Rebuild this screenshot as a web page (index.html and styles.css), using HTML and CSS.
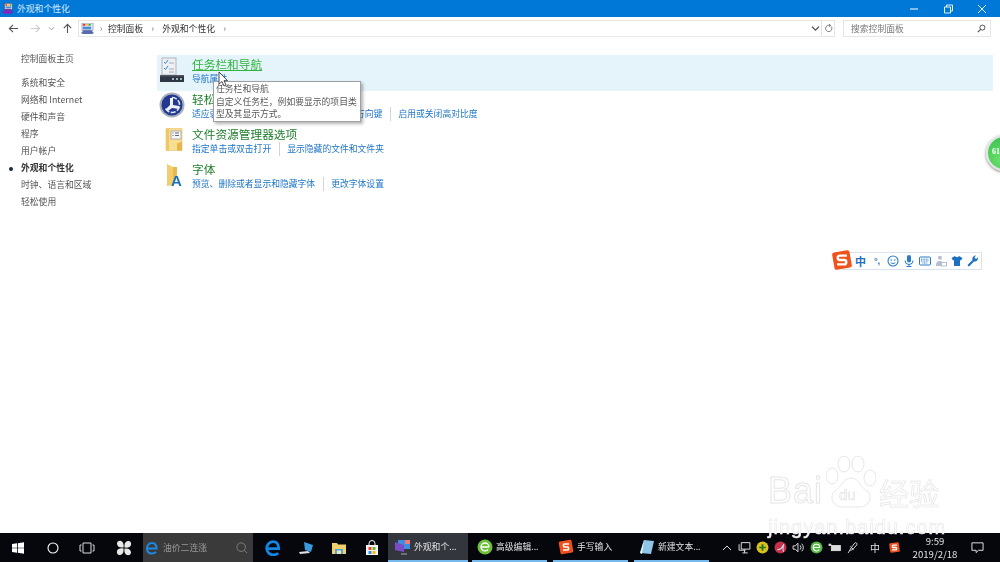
FILE: index.html
```html
<!DOCTYPE html>
<html lang="zh-CN">
<head>
    <meta charset="UTF-8">
    <title>外观和个性化</title>
    <link rel="stylesheet" href="styles.css">
</head>
<body>
    <!-- Title bar -->
    <div class="titlebar">
        <svg class="title-icon" viewBox="0 0 14 12"><rect x="3" y="0" width="9" height="7" fill="#e8eef8" stroke="#445" stroke-width=".6"/><rect x="4" y="1" width="2" height="2" fill="#e33"/><rect x="6.500" y="1" width="2" height="2" fill="#fb3"/><rect x="9" y="1" width="2" height="2" fill="#3a5"/><rect x="4" y="3.600" width="7" height="2.400" fill="#58c"/><path d="M0 10 L4 7 L10 7 L13 10 L11 12 L2 12 Z" fill="#7a2bb8"/></svg>
        <span class="title-text">外观和个性化</span>
        <div class="window-buttons">
            <svg viewBox="0 0 10 10"><path d="M1 5h8" stroke="#fff" fill="none"/></svg>
            <svg viewBox="0 0 10 10"><path d="M1.500 3h6v6h-6zM3.500 3V1h6v6H7.500" stroke="#fff" fill="none" stroke-width=".9"/></svg>
            <svg viewBox="0 0 10 10"><path d="M1 1l8 8M9 1l-8 8" stroke="#fff" fill="none" stroke-width=".9"/></svg>
        </div>
    </div>

    <!-- Address bar -->
    <div class="addressbar">
        <div class="nav-buttons">
            <svg class="nav-btn back" viewBox="0 0 12 12"><path d="M11 6H1.500M5.500 2L1.500 6l4 4" stroke="#555" fill="none" stroke-width="1.200"/></svg>
            <svg class="nav-btn" viewBox="0 0 12 12"><path d="M1 6h9.500M6.500 2l4 4-4 4" stroke="#ccc" fill="none" stroke-width="1.200"/></svg>
            <svg class="nav-drop" viewBox="0 0 8 8"><path d="M1 2.500l3 3 3-3" stroke="#999" fill="none"/></svg>
            <svg class="nav-btn" viewBox="0 0 12 12"><path d="M6 11V1.500M2 5.500l4-4 4 4" stroke="#555" fill="none" stroke-width="1.200"/></svg>
        </div>
        <div class="address-box">
            <svg class="crumb-icon" viewBox="0 0 14 12"><rect x="1" y="0" width="12" height="8" fill="#e8eef8" stroke="#667" stroke-width=".6"/><rect x="2" y="1" width="2.500" height="2" fill="#d33"/><rect x="5" y="1" width="2.500" height="2" fill="#fb3"/><rect x="8" y="1" width="2.500" height="2" fill="#3a5"/><rect x="2" y="4" width="9" height="3" fill="#4a8ad8"/><path d="M0 11 L3 8 L11 8 L14 11 L12 12 L2 12 Z" fill="#5a6ab0"/></svg>
            <span class="crumb-sep">›</span>
            <span class="crumb">控制面板</span>
            <span class="crumb-sep">›</span>
            <span class="crumb">外观和个性化</span>
            <span class="crumb-sep">›</span>
            <svg class="address-drop" viewBox="0 0 8 8"><path d="M1 2.500l3 3 3-3" stroke="#555" fill="none" stroke-width="1.100"/></svg>
        </div>
        <div class="refresh-box">
            <svg viewBox="0 0 10 10"><path d="M7.800 2.600A3.500 3.500 0 1 1 5 1.500H7M5.500 0L7.300 1.500 5.500 3" stroke="#666" fill="none" stroke-width=".9"/></svg>
        </div>
        <div class="search-box">
            <span>搜索控制面板</span>
            <svg viewBox="0 0 10 10"><circle cx="6" cy="4" r="2.800" stroke="#555" fill="none" stroke-width="1.100"/><path d="M4 6L1 9" stroke="#555" stroke-width="1.400"/></svg>
        </div>
    </div>

    <!-- Main area -->
    <div class="main">
        <ul class="sidebar">
            <li class="home">控制面板主页</li>
            <li>系统和安全</li>
            <li>网络和 Internet</li>
            <li>硬件和声音</li>
            <li>程序</li>
            <li>用户帐户</li>
            <li class="current">外观和个性化</li>
            <li>时钟、语言和区域</li>
            <li>轻松使用</li>
        </ul>

        <div class="content">
            <div class="row hover">
                <svg class="row-icon" viewBox="0 0 26 26"><rect x="3" y="1" width="14" height="17" fill="#eef1f4" stroke="#99a" stroke-width=".7"/><path d="M5 5l1.500 1.500L9 3M5 11l1.500 1.500L9 9" stroke="#2a8ad0" fill="none"/><path d="M10 6h5M10 12h5M10 15h5" stroke="#aab"/><rect x="1" y="18" width="24" height="7" fill="#2c3644"/><rect x="1" y="18" width="24" height="1.500" fill="#556"/><path d="M13 22h2M17 22h2M21 22h2" stroke="#cdd" stroke-width="1.500"/></svg>
                <div class="row-text">
                    <div class="row-title">任务栏和导航</div>
                    <div class="row-links"><span>导航属性</span></div>
                </div>
            </div>
            <div class="row">
                <svg class="row-icon" viewBox="0 0 26 26"><circle cx="13" cy="13" r="12.500" fill="#a8afbc"/><circle cx="13" cy="13" r="10.500" fill="#23398f"/><path d="M13 5.500a7.500 7.500 0 1 1-7 10" stroke="#dfe6f6" stroke-width="1.600" fill="none" stroke-dasharray="5 1.500"/><path d="M11 6h3v7l6 1v3l-7-1-4 3-2-2 4-4z" fill="#eef2fb"/></svg>
                <div class="row-text">
                    <div class="row-title">轻松使用设置中心</div>
                    <div class="row-links"><span>适应弱视</span><span>使用屏幕阅读</span><span>启用易按的方向键</span><span>启用或关闭高对比度</span></div>
                </div>
            </div>
            <div class="row">
                <svg class="row-icon" viewBox="0 0 26 26"><path d="M7 1.500h16v22H7z" fill="#f8de93" stroke="#e5c26b" stroke-width=".6"/><path d="M7 1.500h3v22H7z" fill="#efc765"/><rect x="12" y="4" width="10" height="8" fill="#f4f6f8" stroke="#889" stroke-width=".6"/><path d="M13.500 6h1M13.500 8.500h1M16 6h4M16 8.500h4" stroke="#667"/><path d="M18 23.500v-7l5-2v9z" fill="#e8b54a"/></svg>
                <div class="row-text">
                    <div class="row-title">文件资源管理器选项</div>
                    <div class="row-links"><span>指定单击或双击打开</span><span>显示隐藏的文件和文件夹</span></div>
                </div>
            </div>
            <div class="row">
                <svg class="row-icon" viewBox="0 0 26 26"><path d="M8 2l6 3v18l-6 1z" fill="#f3cd6e"/><path d="M14 5h4v8l-4 10z" fill="#e9b94f"/><text x="12" y="24" class="font-a">A</text></svg>
                <div class="row-text">
                    <div class="row-title">字体</div>
                    <div class="row-links"><span>预览、删除或者显示和隐藏字体</span><span>更改字体设置</span></div>
                </div>
            </div>
        </div>
    </div>

    <!-- Taskbar -->
    <div class="taskbar">
        <div class="tb-icon start">
            <svg viewBox="0 0 12 12"><path d="M0 2l5-.7V5.700H0zM5.800 1.200L12 .3v5.400H5.800zM0 6.300h5v4.400l-5-.7zM5.800 6.300H12v5.400l-6.200-.9z" fill="#fff"/></svg>
        </div>
        <div class="tb-icon cortana">
            <svg viewBox="0 0 12 12"><circle cx="6" cy="6" r="5" stroke="#fff" stroke-width="1.100" fill="none"/></svg>
        </div>
        <div class="tb-icon taskview">
            <svg viewBox="0 0 16 12"><path d="M4 1h8v10H4zM2.500 3H1v6h1.500M13.500 3H15v6h-1.500" stroke="#ddd" fill="none"/></svg>
        </div>
        <div class="tb-icon fan">
            <svg viewBox="0 0 16 16"><g fill="#e8e8e8"><path d="M7.500 7.500C3 8 1 6 1 3.500 1 1.500 3 .5 5 1c2 .5 3 3 2.500 6.500z"/><path d="M8.500 7.500C8 3 10 1 12.500 1c2 0 3 2 2.500 4-.5 2-3 3-6.500 2.500z"/><path d="M8.500 8.500C13 8 15 10 15 12.500c0 2-2 3-4 2.500-2-.5-3-3-2.500-6.500z"/><path d="M7.500 8.500C8 13 6 15 3.500 15c-2 0-3-2-2.500-4 .5-2 3-3 6.500-2.500z"/></g></svg>
        </div>
        <div class="tb-search">
            <svg class="tb-search-e" viewBox="0 0 14 14"><path d="M2 7.500h9.500C11.500 4 9.500 2 7 2 4 2 2 4.500 2 7.500s2 5 5 5c1.500 0 3-.5 4-1.500" stroke="#1d8ae8" stroke-width="2" fill="none"/></svg>
            <span>油价二连涨</span>
            <svg class="tb-search-lens" viewBox="0 0 14 14"><circle cx="6" cy="6" r="5" stroke="#888" fill="none"/><path d="M10 10l3 3" stroke="#888"/></svg>
        </div>
        <div class="tb-icon edge">
            <svg viewBox="0 0 14 14"><path d="M1.500 7.500h10.500C12 3.500 10 1.500 7 1.500 3.500 1.500 1.500 4.500 1.500 7.500s2.500 5.500 5.500 5.500c2 0 3.500-.5 4.500-1.500" stroke="#1088e8" stroke-width="2.400" fill="none"/></svg>
        </div>
        <div class="tb-icon">
            <svg viewBox="0 0 16 16"><path d="M6 2l9 3-2 7-6-2z" fill="#3a9ae0"/><path d="M1 12l9-1 2 2-10 1z" fill="#dde"/></svg>
        </div>
        <div class="tb-icon">
            <svg viewBox="0 0 16 16"><path d="M1 3h5l1 1.500h8V14H1z" fill="#f3cf6c"/><rect x="4" y="9" width="8" height="5" fill="#4aa8dc"/><rect x="6" y="10.500" width="4" height="3.500" fill="#f3e6b0"/></svg>
        </div>
        <div class="tb-icon">
            <svg viewBox="0 0 16 16"><path d="M2 5h12v10H2z" fill="#f4f4f4"/><path d="M5 5V3.500a3 3 0 0 1 6 0V5" stroke="#f4f4f4" fill="none"/><rect x="4.500" y="7" width="3" height="3" fill="#e8452c"/><rect x="8.500" y="7" width="3" height="3" fill="#6cb52d"/><rect x="4.500" y="11" width="3" height="3" fill="#2a8fe0"/><rect x="8.500" y="11" width="3" height="3" fill="#f6b800"/></svg>
        </div>

        <div class="task active">
            <svg viewBox="0 0 16 16"><rect x="3" y="1" width="12" height="9" fill="#3d8ee0"/><rect x="10" y="1" width="5" height="4" fill="#f27a7a"/><path d="M0 3l9 3v7l-9-2z" fill="#7a4bc8"/><path d="M6 15h6" stroke="#aaa"/></svg>
            <span>外观和个...</span>
        </div>
        <div class="task">
            <svg viewBox="0 0 16 16"><circle cx="8" cy="8" r="7.500" fill="#6cc03a"/><path d="M4 8h8M4 8a4 4 0 0 1 8 0M4 8a4 4 0 0 0 7 2.500" stroke="#fff" stroke-width="1.300" fill="none"/></svg>
            <span>高级编辑...</span>
        </div>
        <div class="task">
            <svg viewBox="0 0 16 16"><rect x="1.500" y="1.500" width="13" height="13" rx="1.500" fill="#ee4f1c" transform="rotate(-10 8 8)"/><path d="M11 5H6.500C5 5 5 8 6.500 8h3c1.500 0 1.500 3 0 3H5" stroke="#fff" stroke-width="1.600" fill="none"/></svg>
            <span>手写输入</span>
        </div>
        <div class="task">
            <svg viewBox="0 0 16 16"><path d="M5 1l10 1-3 13-11-1z" fill="#8fc6e8"/><path d="M5 1L1 14l2 1z" fill="#e8f4fa"/></svg>
            <span>新建文本...</span>
        </div>

        <div class="tray">
            <svg class="tray-chevron" viewBox="0 0 10 10"><path d="M1 7l4-4 4 4" stroke="#ddd" fill="none"/></svg>
            <svg class="tray-icon" viewBox="0 0 12 12"><path d="M3 1.500h8v6H3zM1 3v5.500h6M6 8v3M4 11h5" stroke="#ddd" fill="none" stroke-width=".9"/></svg>
            <svg class="tray-icon" viewBox="0 0 12 12"><circle cx="6" cy="6" r="5.500" fill="#d8c020"/><path d="M3 6h6M6 3v6" stroke="#207020" stroke-width="1.600"/></svg>
            <svg class="tray-icon" viewBox="0 0 12 12"><circle cx="6" cy="6" r="5.500" fill="#c8304a"/><path d="M3 8c3 0 5-2 6-5-1 4-1 6 0 7" stroke="#cde" fill="none"/></svg>
            <svg class="tray-icon" viewBox="0 0 12 12"><path d="M1 4.500h2l2.500-2.500v8L3 7.500H1zM7.500 4a3 3 0 0 1 0 4M9 2.500a5.500 5.500 0 0 1 0 7" stroke="#ddd" fill="none" stroke-width=".9"/></svg>
            <svg class="tray-icon" viewBox="0 0 12 12"><circle cx="6" cy="6" r="5.500" fill="#58b848"/><path d="M3 6h6M3 6a3 3 0 0 1 6 0M3 6a3 3 0 0 0 5.500 1.800" stroke="#fff" fill="none"/></svg>
            <svg class="tray-icon" viewBox="0 0 12 12"><rect x="3" y="4" width="8.500" height="5" fill="#ddd" stroke="#eee" stroke-width=".6"/><rect x=".5" y="2.500" width="2.500" height="2" fill="#ddd"/></svg>
            <svg class="tray-icon" viewBox="0 0 12 12"><path d="M2 11l3-5 3-4c1-1 2.500 0 2 1.500L7 7 4 9M4 5l3 3" stroke="#ddd" fill="none" stroke-width=".9"/></svg>
            <span class="tray-ime">中</span>
            <svg class="tray-icon" viewBox="0 0 16 16"><rect x="2" y="2" width="12" height="12" rx="1.500" fill="#ee4f1c" transform="rotate(-8 8 8)"/><path d="M11 5H6.500C5 5 5 8 6.500 8h3c1.500 0 1.500 3 0 3H5" stroke="#fff" stroke-width="1.600" fill="none"/></svg>
            <div class="clock"><div>9:59</div><div>2019/2/18</div></div>
            <svg class="tray-notify" viewBox="0 0 14 14"><path d="M1 2h12v8H8l-2.500 2.500V10H1z" stroke="#eee" fill="none"/></svg>
        </div>
    </div>

    <!-- Floating items -->
    <div class="tooltip">
        <div>任务栏和导航</div>
        <div>自定义任务栏，例如要显示的项目类</div>
        <div>型及其显示方式。</div>
    </div>
    <svg class="cursor" viewBox="0 0 10 16"><path d="M1 1v12l3-2.500 2 4.500 2-1-2-4.300h3.500z" fill="#fff" stroke="#222" stroke-width=".8"/></svg>

    <div class="green-ball"><span>61</span></div>

    <div class="ime-bar">
        <svg class="ime-logo" viewBox="0 0 20 20"><rect x="2" y="2" width="16" height="16" rx="2" fill="#f0521c" transform="rotate(-10 10 10)"/><path d="M14.500 6H8c-2.500 0-2.500 4 0 4h4c2.500 0 2.500 4 0 4H5.500" stroke="#fff" stroke-width="2.200" fill="none"/></svg>
        <span class="ime-zh">中</span>
        <span class="ime-punc">°,</span>
        <svg viewBox="0 0 12 12"><circle cx="6" cy="6" r="5" fill="none" stroke="#2a7ac8" stroke-width="1.100"/><circle cx="4.300" cy="5" r=".8" fill="#2a7ac8"/><circle cx="7.700" cy="5" r=".8" fill="#2a7ac8"/><path d="M3.700 7.500c1 1.300 3.600 1.300 4.600 0" stroke="#2a7ac8" fill="none"/></svg>
        <svg viewBox="0 0 12 12"><rect x="4" y="0" width="4" height="7.500" rx="2" fill="#2a7ac8"/><path d="M2 5.500a4 4 0 0 0 8 0M6 9.500V12M3.500 11.500h5" stroke="#2a7ac8" fill="none"/></svg>
        <svg viewBox="0 0 12 12"><rect x=".5" y="2" width="11" height="8" rx="1" fill="none" stroke="#2a7ac8"/><path d="M2 4.200h8M2 6h8M3.500 8h5" stroke="#2a7ac8" stroke-dasharray="1 .6"/></svg>
        <svg viewBox="0 0 12 12"><circle cx="5" cy="2.800" r="2" fill="#b4c0d0"/><path d="M1 11c0-4 1.500-5 4-5s3 1 3 2H6v3z" fill="#b4c0d0"/><rect x="6.500" y="7.500" width="5" height="3.500" fill="none" stroke="#b4c0d0"/></svg>
        <svg viewBox="0 0 12 12"><path d="M4 1L0.500 3 2 5.500l1-.5V11h6V5l1 .5L11.500 3 8 1C7.500 2.500 4.500 2.500 4 1z" fill="#1f70c0"/></svg>
        <svg viewBox="0 0 12 12"><path d="M1 11c-.5-.5-.5-1 0-1.500L5.500 5C5 3 6 .5 9 .5L7.500 2.500 9 4l2-1.500C11.500 5 9 7 7 6.500L2.500 11c-.5.500-1 .500-1.500 0z" fill="#1f70c0"/></svg>
    </div>

    <div class="watermark">
        <div class="wm-top">
            <span class="wm-bai">Bai</span>
            <svg class="wm-paw" viewBox="0 0 50 56">
                <g fill="#fff" stroke="#e6e6e6" stroke-width="1"><ellipse cx="6" cy="20" rx="6" ry="8"/><ellipse cx="18" cy="8" rx="6" ry="8"/><ellipse cx="32" cy="8" rx="6" ry="8"/><ellipse cx="44" cy="22" rx="6" ry="8"/><path d="M25 22c8 0 9 9 16 13 6 4 3 16-7 16H16C6 51 3 39 9 35c7-4 8-13 16-13z"/></g>
                <text x="13" y="44" class="wm-du">du</text>
            </svg>
            <span class="wm-jy">经验</span>
        </div>
        <div class="wm-url">jingyan.baidu.com</div>
    </div>
</body>
</html>
```

FILE: styles.css
```css
* {
    box-sizing: border-box;
}

html, body {
    margin: 0;
    height: 100%;
}

body {
    position: relative;
    display: flex;
    flex-direction: column;
    overflow: hidden;
    background-color: #ffffff;
    font-family: "Noto Sans CJK SC", "Noto Sans", sans-serif;
    font-size: 8.8px;
    color: #444;
    filter: blur(0.3px);
}

svg {
    display: block;
}

/* Title bar */
.titlebar {
    display: flex;
    align-items: center;
    flex: 0 0 17px;
    padding-left: 2px;
    background-color: #0078d7;
    color: #d6e8f7;
}

.title-icon {
    width: 12px;
    height: 11px;
    margin-right: 3px;
}

.window-buttons {
    display: flex;
    gap: 24px;
    margin-left: auto;
    padding-right: 13px;
}

.window-buttons svg {
    width: 10px;
    height: 10px;
}

/* Address bar */
.addressbar {
    display: flex;
    align-items: flex-start;
    flex: 0 0 23px;
    padding-top: 3px;
    color: #333;
}

.nav-buttons {
    display: flex;
    align-items: center;
    width: 78px;
    height: 17px;
    padding-left: 8px;
}

.nav-btn {
    flex: none;
    width: 11px;
    height: 11px;
}

.nav-btn.back {
    margin-right: 11px;
}

.nav-drop {
    flex: none;
    width: 7px;
    height: 7px;
    margin: 0 7px;
}

.address-box {
    display: flex;
    align-items: center;
    width: 744px;
    height: 17px;
    padding-left: 2px;
    border: 1px solid #e6e6e6;
}

.crumb-icon {
    width: 13px;
    height: 11px;
}

.crumb-sep {
    width: 19px;
    text-align: center;
    color: #777;
    font-size: 9px;
}

.crumb-sep:nth-of-type(1) {
    width: 14px;
}

.address-drop {
    width: 9px;
    height: 9px;
    margin-left: auto;
    margin-right: 1px;
}

.refresh-box {
    display: flex;
    align-items: center;
    justify-content: center;
    width: 13px;
    height: 17px;
    border: 1px solid #e6e6e6;
    border-left: 0;
}

.refresh-box svg {
    width: 9px;
    height: 9px;
}

.search-box {
    display: flex;
    align-items: center;
    justify-content: space-between;
    width: 148px;
    height: 17px;
    margin-left: 8px;
    padding: 0 4px 0 7px;
    border: 1px solid #e6e6e6;
    color: #777;
}

.search-box svg {
    width: 9px;
    height: 9px;
}

/* Main area */
.main {
    display: flex;
    flex: 1;
    min-height: 0;
}

.sidebar {
    flex: 0 0 157px;
    margin: 0;
    padding: 11px 0 0 21px;
    list-style: none;
    color: #555;
}

.sidebar li {
    height: 16.900px;
    line-height: 16.900px;
    white-space: nowrap;
}

.sidebar .home {
    margin-bottom: 7.500px;
}

.sidebar .current {
    position: relative;
    font-weight: bold;
    color: #333;
}

.sidebar .current::before {
    content: "";
    position: absolute;
    left: -12px;
    top: 7px;
    width: 4px;
    height: 4px;
    border-radius: 50%;
    background-color: #1c2a44;
}

.content {
    flex: 1;
    padding: 15px 7px 0 0;
}

.row {
    display: flex;
    align-items: flex-start;
    height: 35px;
}

.row.hover {
    height: 36px;
    margin-bottom: -1px;
    background-color: #e5f3fb;
}

.row-icon {
    flex: none;
    width: 26px;
    height: 26px;
    margin: 2px 7px 0 2px;
}

.row-title {
    height: 17px;
    line-height: 18px;
    font-size: 11.700px;
    color: #1f7d2c;
    white-space: nowrap;
}

.row.hover .row-title {
    color: #2fb53c;
    text-decoration: underline;
}

.row-links {
    display: flex;
    height: 14px;
    line-height: 14px;
    color: #1c74c8;
    white-space: nowrap;
}

.row-links span + span {
    margin-left: 8px;
    padding-left: 7px;
    border-left: 1px solid #d4d4d4;
}

.font-a {
    font: bold 15px "Liberation Sans", sans-serif;
    fill: #1a6fc0;
}

/* Taskbar */
.taskbar {
    display: flex;
    align-items: center;
    flex: 0 0 29px;
    background-color: #05070c;
    color: #e0e0e0;
}

.tb-icon {
    display: flex;
    align-items: center;
    justify-content: center;
    width: 33px;
    height: 100%;
}

.tb-icon svg {
    width: 16px;
    height: 16px;
}

.tb-icon.start {
    width: 36px;
}

.tb-icon.start svg,
.tb-icon.cortana svg {
    width: 12px;
    height: 12px;
}

.tb-icon.taskview {
    width: 36px;
}

.tb-icon.fan {
    width: 37px;
}

.tb-search {
    display: flex;
    align-items: center;
    width: 110px;
    height: 100%;
    margin: 0 3px 0 1px;
    padding: 0 5px 0 2px;
    background-color: #3a3a3a;
    color: #999;
}

.tb-search-e {
    width: 14px;
    height: 14px;
    margin-right: 4px;
}

.tb-search-lens {
    width: 12px;
    height: 12px;
    margin-left: auto;
}

.task {
    display: flex;
    align-items: center;
    gap: 3px;
    width: 75px;
    height: 100%;
    margin-right: 6px;
    padding: 0 0 0 5px;
    border-bottom: 2px solid #76b9ed;
    white-space: nowrap;
}

.task svg {
    flex: none;
    width: 16px;
    height: 16px;
}

.task.active {
    width: 80px;
    margin-right: 4px;
    padding-left: 7px;
    background-color: #33373d;
}

.tray {
    display: flex;
    align-items: center;
    flex: 1;
    height: 100%;
    padding-left: 7px;
}

.tray-chevron {
    flex: none;
    width: 10px;
    height: 10px;
    margin-right: 6px;
}

.tray-icon {
    flex: none;
    width: 13px;
    height: 13px;
    margin-right: 5px;
}

.tray-ime {
    flex: none;
    width: 14px;
    margin: 0 6px 0 4px;
    font-size: 10px;
    text-align: center;
}

.clock {
    flex: 0 0 50px;
    margin-left: 4px;
    font-size: 9.600px;
    line-height: 13px;
    text-align: center;
    white-space: nowrap;
}

.tray-notify {
    width: 13px;
    height: 13px;
    margin-left: auto;
    margin-right: 16px;
}

/* Floating items */
.tooltip {
    position: absolute;
    left: 213px;
    top: 81px;
    width: 148px;
    height: 41px;
    padding: 1px 2px;
    border: 1px solid #a0a0a0;
    background-color: #fff;
    box-shadow: 2px 2px 3px rgba(0, 0, 0, 0.3);
    line-height: 12.500px;
    color: #575757;
    white-space: nowrap;
}

.cursor {
    position: absolute;
    left: 218px;
    top: 71px;
    width: 10px;
    height: 16px;
}

.green-ball {
    position: absolute;
    left: 986px;
    top: 135px;
    width: 36px;
    height: 36px;
    padding-left: 4px;
    border: 2px solid #dfe6df;
    border-radius: 50%;
    background: radial-gradient(circle at 40% 70%, #6be06b, #2fb84c);
    box-shadow: 0 1px 3px rgba(0, 0, 0, 0.5);
    font: bold 8px/30px "Liberation Serif", serif;
    color: #fff;
}

.ime-bar {
    position: absolute;
    left: 842px;
    top: 252px;
    display: flex;
    align-items: center;
    gap: 4px;
    width: 140px;
    height: 18px;
    padding-left: 12px;
    border: 1px solid #dbe4ee;
    background-color: #fff;
}

.ime-bar > svg {
    flex: none;
    width: 12px;
    height: 12px;
}

.ime-bar > .ime-logo {
    position: absolute;
    left: -12px;
    top: -4px;
    width: 22px;
    height: 22px;
}

.ime-zh {
    width: 12px;
    font-size: 11px;
    font-weight: bold;
    line-height: 12px;
    color: #1f70c0;
}

.ime-punc {
    width: 12px;
    font: bold 9px/12px "Liberation Sans", sans-serif;
    color: #1f70c0;
    text-align: center;
}

.watermark {
    position: absolute;
    left: 768px;
    top: 455px;
    width: 180px;
    color: #fff;
    -webkit-text-stroke: 1px #e6e6e6;
    font-family: "Liberation Sans", sans-serif;
}

.wm-top {
    display: flex;
    align-items: flex-end;
    height: 57px;
}

.wm-bai {
    flex: none;
    font-size: 36px;
    line-height: 42px;
    letter-spacing: 1px;
}

.wm-paw {
    flex: none;
    width: 50px;
    height: 56px;
    margin-left: 3px;
}

.wm-du {
    font: 15px "Liberation Sans", sans-serif;
    fill: #fff;
    stroke: #e4e4e4;
    stroke-width: .7;
}

.wm-jy {
    flex: none;
    margin-left: 3px;
    font-family: "Noto Sans CJK SC", sans-serif;
    font-size: 30px;
    line-height: 40px;
    white-space: nowrap;
    -webkit-text-stroke-width: .7px;
}

.wm-url {
    margin-top: 4px;
    font-size: 20px;
    line-height: 22px;
    letter-spacing: 1px;
    white-space: nowrap;
    -webkit-text-stroke-width: .6px;
}
```
